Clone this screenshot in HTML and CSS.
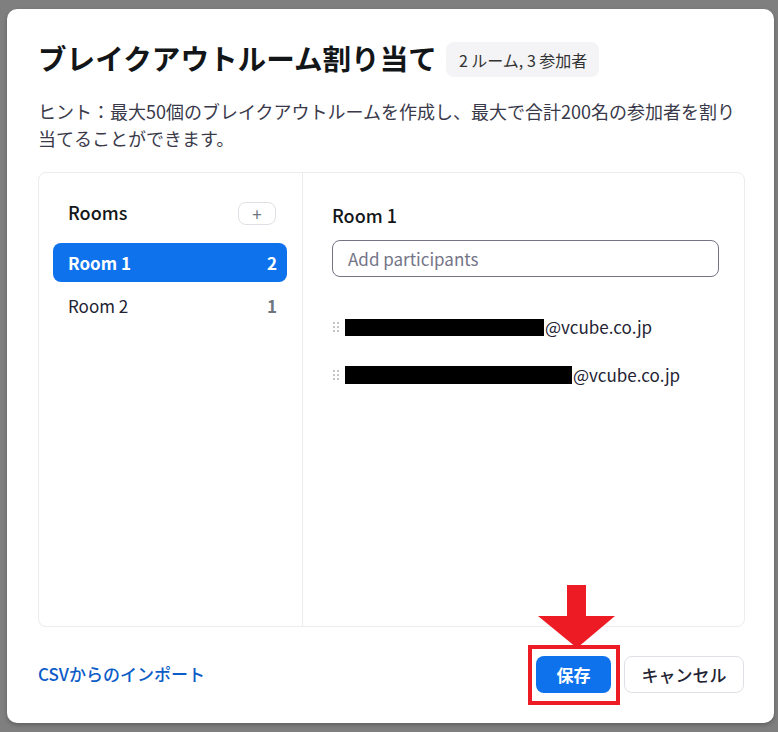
FILE: index.html
```html
<!DOCTYPE html>
<html lang="ja">
<head>
<meta charset="utf-8">
<title>ブレイクアウトルーム割り当て</title>
<link rel="stylesheet" href="styles.css">
</head>
<body>
<div class="dialog">
  <div class="title-row">
    <h1 class="title">ブレイクアウトルーム割り当て</h1>
    <span class="badge">2 ルーム, 3 参加者</span>
  </div>
  <p class="hint">ヒント：最大50個のブレイクアウトルームを作成し、最大で合計200名の参加者を割り当てることができます。</p>
  <div class="panel">
    <div class="rooms">
      <div class="rooms-head">
        <span class="rooms-title">Rooms</span>
        <button class="add-btn">+</button>
      </div>
      <ul class="room-list">
        <li class="room active"><span>Room 1</span><span class="count">2</span></li>
        <li class="room"><span>Room 2</span><span class="count">1</span></li>
      </ul>
    </div>
    <div class="detail">
      <h2 class="detail-title">Room 1</h2>
      <div class="input">Add participants</div>
      <ul class="people">
        <li class="person">
          <svg class="grip" width="7" height="10" viewBox="0 0 7 10"><g fill="#c4c4c9"><rect x="0" y="0" width="2" height="2"/><rect x="4" y="0" width="2" height="2"/><rect x="0" y="4" width="2" height="2"/><rect x="4" y="4" width="2" height="2"/><rect x="0" y="8" width="2" height="2"/><rect x="4" y="8" width="2" height="2"/></g></svg>
          <span class="redact r1"></span><span class="mail">@vcube.co.jp</span>
        </li>
        <li class="person">
          <svg class="grip" width="7" height="10" viewBox="0 0 7 10"><g fill="#c4c4c9"><rect x="0" y="0" width="2" height="2"/><rect x="4" y="0" width="2" height="2"/><rect x="0" y="4" width="2" height="2"/><rect x="4" y="4" width="2" height="2"/><rect x="0" y="8" width="2" height="2"/><rect x="4" y="8" width="2" height="2"/></g></svg>
          <span class="redact r2"></span><span class="mail">@vcube.co.jp</span>
        </li>
      </ul>
    </div>
  </div>
  <div class="footer">
    <a class="csv">CSVからのインポート</a>
    <div class="actions">
      <button class="btn save">保存</button>
      <button class="btn cancel">キャンセル</button>
    </div>
  </div>
</div>
<div class="mark-box"></div>
<svg class="mark-arrow" width="80" height="64" viewBox="0 0 80 64"><polygon fill="#ed1c24" points="29,0 48,0 48,31 77,31 39,63 0,31 29,31"/></svg>
</body>
</html>
```
FILE: styles.css
```css
* { box-sizing: border-box; }
html, body { margin: 0; padding: 0; }
body {
  background: #7f7f7f;
  font-family: "Noto Sans CJK JP", "Noto Sans", sans-serif;
  color: #232333;
  width: 778px;
  height: 732px;
  overflow: hidden;
  position: relative;
}
.dialog {
  margin: 9px 4px 0 7px;
  width: 767px;
  height: 714px;
  background: #fff;
  border-radius: 10px;
  box-shadow: 0 2px 4px rgba(0,0,0,0.25);
  padding: 32px 29px 0 31px;
  display: flex;
  flex-direction: column;
}
.title-row {
  display: flex;
  align-items: center;
  gap: 9px;
  height: 37px;
}
.title {
  margin: 0;
  font-size: 28.6px;
  line-height: 36px;
  font-weight: 700;
  color: #131619;
  margin-top: -3px;
}
.badge {
  background: #f4f4f6;
  border-radius: 8px;
  height: 35px;
  padding: 0 12px 0 13px;
  display: flex;
  align-items: center;
  font-size: 16px;
  color: #333;
}
.hint {
  margin: 20px 0 0;
  font-size: 18px;
  line-height: 27px;
  color: #39394a;
}
.panel {
  margin-top: 20px;
  height: 455px;
  border: 1px solid #ebebf0;
  border-radius: 8px;
  display: flex;
}
.rooms {
  width: 264px;
  border-right: 1px solid #ebebf0;
  padding: 28px 15px 0 14px;
}
.rooms-head {
  display: flex;
  align-items: center;
  justify-content: space-between;
  padding: 0 11px 0 15px;
  height: 24px;
}
.rooms-title {
  font-size: 18px;
  font-weight: 500;
  color: #131619;
  margin-top: -3px;
}
.add-btn {
  width: 38px;
  height: 23px;
  border: 1px solid #dfe0e6;
  border-radius: 8px;
  background: #fff;
  font-family: inherit;
  font-size: 17px;
  line-height: 1;
  color: #6e7680;
  padding: 0;
}
.room-list {
  list-style: none;
  margin: 18px 0 0;
  padding: 0;
  display: flex;
  flex-direction: column;
  gap: 4px;
}
.room {
  height: 39px;
  border-radius: 8px;
  padding: 0 10px 0 15px;
  display: flex;
  align-items: center;
  justify-content: space-between;
  font-size: 17px;
  color: #232333;
}
.room span:first-child { margin-top: -1px; }
.room .count {
  font-weight: 700;
  color: #6e7680;
}
.room.active {
  background: #0e72ed;
  color: #fff;
  font-weight: 700;
}
.room.active .count { color: #fff; }
.detail {
  flex: 1;
  padding: 31px 25px 0 29px;
}
.detail-title {
  margin: 0;
  font-size: 18px;
  line-height: 24px;
  font-weight: 500;
  color: #131619;
  position: relative;
  top: -1px;
}
.input {
  margin-top: 12px;
  height: 37px;
  border: 1px solid #747487;
  border-radius: 8px;
  padding: 0 15px;
  display: flex;
  align-items: center;
  font-size: 17px;
  color: #747487;
}
.people {
  list-style: none;
  margin: 26px 0 0;
  padding: 0;
}
.person {
  height: 48px;
  display: flex;
  align-items: center;
  font-size: 17px;
  color: #232333;
}
.grip { margin: 0 5px 0 1px; flex: none; }
.redact { background: #000; display: block; flex: none; }
.r1 { width: 199px; height: 17px; }
.r2 { width: 227px; height: 18px; }
.mail { margin-left: 1px; margin-top: -2px; }
.footer {
  margin-top: 29px;
  height: 37px;
  display: flex;
  align-items: center;
  justify-content: space-between;
}
.csv {
  font-size: 17px;
  font-weight: 500;
  color: #0b5cc7;
  margin-top: -2px;
}
.actions {
  display: flex;
  gap: 13px;
  margin-right: 1px;
}
.btn {
  height: 37px;
  border-radius: 8px;
  font-family: inherit;
  font-size: 17px;
  padding: 0;
}
.save {
  width: 75px;
  background: #0e72ed;
  border: none;
  color: #fff;
  font-weight: 700;
}
.cancel {
  width: 120px;
  background: #fff;
  border: 1px solid #dfe0e6;
  color: #232333;
  font-weight: 500;
}
.mark-box {
  position: absolute;
  left: 528px;
  top: 645px;
  width: 92px;
  height: 60px;
  border: 4px solid #ed1c24;
}
.mark-arrow {
  position: absolute;
  left: 538px;
  top: 585px;
}
```
